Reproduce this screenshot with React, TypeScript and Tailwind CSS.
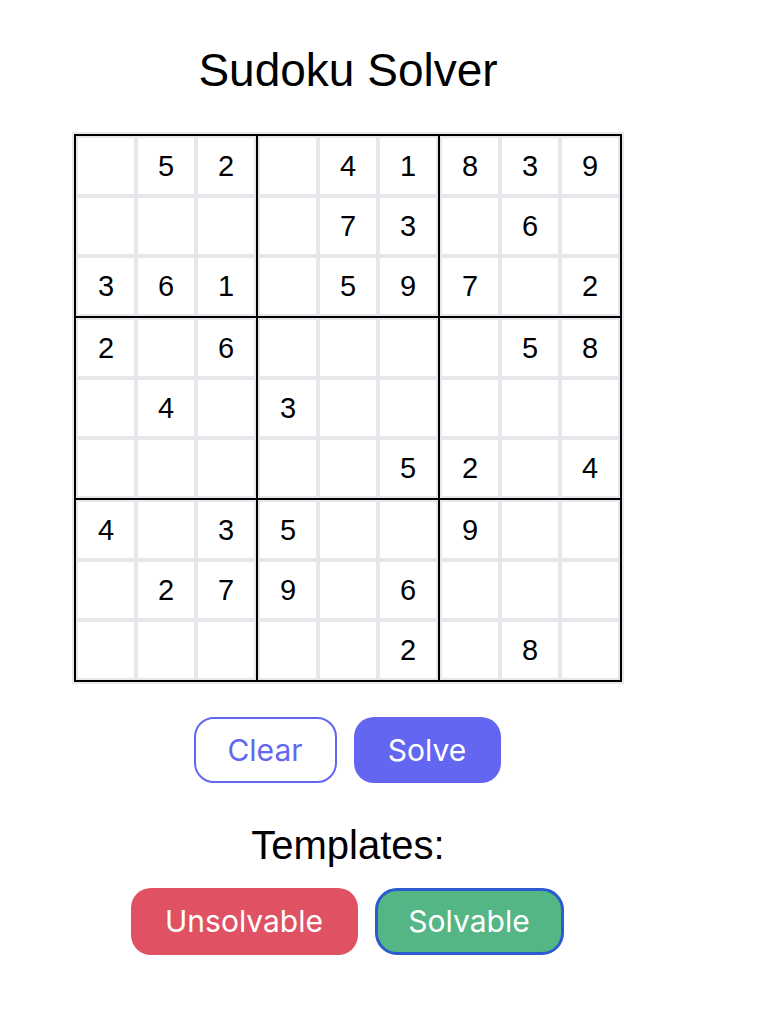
import React from "react";

const puzzle: string[] = [
    "052041839",
    "000073060",
    "361059702",
    "206000058",
    "040300000",
    "000005204",
    "403500900",
    "027906000",
    "000002080",
];

function Cell({ value }: { value: string }) {
    return (
        <div className="w-[60px] h-[60px] border-2 border-[#e5e7eb] bg-white flex items-center justify-center pt-[2px] text-[29px] text-black font-['Liberation_Sans',sans-serif]">
            {value === "0" ? "" : value}
        </div>
    );
}

function Block({ br, bc }: { br: number; bc: number }) {
    const cells: string[] = [];
    for (let r = 0; r < 3; r++) {
        for (let c = 0; c < 3; c++) {
            cells.push(puzzle[br * 3 + r][bc * 3 + c]);
        }
    }
    return (
        <div className="grid grid-cols-3 bg-white">
            {cells.map((v, i) => (
                <Cell key={i} value={v} />
            ))}
        </div>
    );
}

export default function App() {
    const blocks: { br: number; bc: number }[] = [];
    for (let br = 0; br < 3; br++) for (let bc = 0; bc < 3; bc++) blocks.push({ br, bc });

    return (
        <div className="w-[764px] min-h-[1014px] bg-white">
            <div className="w-[696px] flex flex-col items-center pt-[40px] font-['Liberation_Sans',sans-serif] text-black">
                <h1 className="text-[46px] leading-[60px]">Sudoku Solver</h1>

                <div className="mt-[32px] border-2 border-[#e5e7eb]">
                    <div className="grid grid-cols-3 gap-[2px] bg-black p-[2px]">
                        {blocks.map((b) => (
                            <Block key={`${b.br}-${b.bc}`} br={b.br} bc={b.bc} />
                        ))}
                    </div>
                </div>

                <div className="mt-[33px] flex gap-[17px] pr-[2px] font-['Inter',sans-serif]">
                    <button className="w-[143px] h-[66px] rounded-[20px] border-2 border-[#6366f1] bg-white text-[#6366f1] text-[30px]">
                        Clear
                    </button>
                    <button className="w-[147px] h-[66px] rounded-[20px] bg-[#6366f1] text-white text-[30px]">
                        Solve
                    </button>
                </div>

                <h2 className="mt-[39px] text-[40px] leading-[46px]">Templates:</h2>

                <div className="mt-[20px] flex gap-[17px] pr-[2px] font-['Inter',sans-serif]">
                    <button className="w-[227px] h-[67px] rounded-[20px] bg-[#e05263] text-white text-[30px]">
                        Unsolvable
                    </button>
                    <button className="w-[189px] h-[67px] rounded-[22px] border-[3px] border-[#2b5bcf] bg-[#55b685] text-white text-[30px]">
                        Solvable
                    </button>
                </div>
            </div>
        </div>
    );
}
